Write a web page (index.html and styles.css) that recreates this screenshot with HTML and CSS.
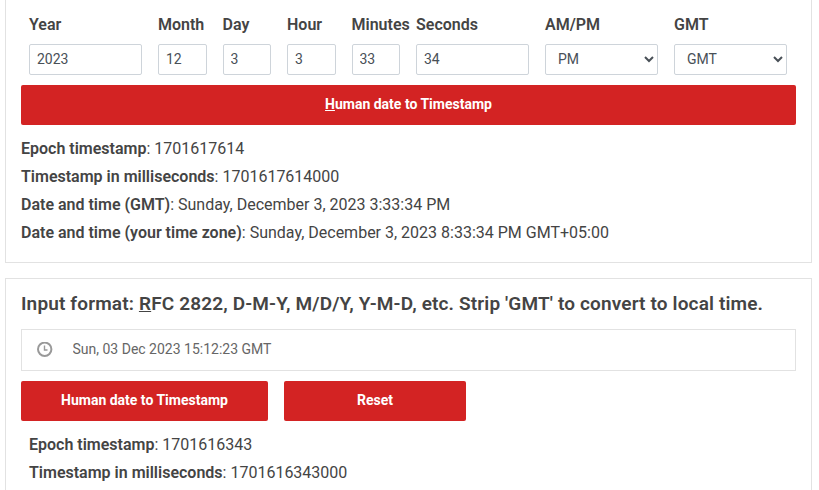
FILE: index.html
```html
<!DOCTYPE html>
<html lang="en">
<head>
    <meta charset="UTF-8">
    <meta name="viewport" content="width=device-width, initial-scale=1.0">
    <title>Epoch Converter</title>
    <link rel="stylesheet" href="styles.css">
</head>
<body>
    <!-- Date fields to timestamp -->
    <div class="card">
        <div class="date-row">
            <div class="field wide">
                <label for="year">Year</label>
                <input type="text" id="year" value="2023">
            </div>
            <div class="field">
                <label for="month">Month</label>
                <input type="text" id="month" value="12">
            </div>
            <div class="field">
                <label for="day">Day</label>
                <input type="text" id="day" value="3">
            </div>
            <div class="field">
                <label for="hour">Hour</label>
                <input type="text" id="hour" value="3">
            </div>
            <div class="field">
                <label for="minutes">Minutes</label>
                <input type="text" id="minutes" value="33">
            </div>
            <div class="field wide">
                <label for="seconds">Seconds</label>
                <input type="text" id="seconds" value="34">
            </div>
            <div class="field wide">
                <label for="ampm">AM/PM</label>
                <select id="ampm">
                    <option>AM</option>
                    <option selected>PM</option>
                </select>
            </div>
            <div class="field wide">
                <label for="zone">GMT</label>
                <select id="zone">
                    <option>GMT</option>
                    <option>Local</option>
                </select>
            </div>
        </div>
        <button class="btn btn-full"><u>H</u>uman date to Timestamp</button>
        <div class="result">
            <p><b>Epoch timestamp</b>: 1701617614</p>
            <p><b>Timestamp in milliseconds</b>: 1701617614000</p>
            <p><b>Date and time (GMT)</b>: Sunday, December 3, 2023 3:33:34 PM</p>
            <p><b>Date and time (your time zone)</b>: Sunday, December 3, 2023 8:33:34 PM GMT+05:00</p>
        </div>
    </div>

    <!-- Text date to timestamp -->
    <div class="card card-text">
        <h3>Input format: <u>R</u>FC 2822, D-M-Y, M/D/Y, Y-M-D, etc. Strip 'GMT' to convert to local time.</h3>
        <div class="date-input">
            <svg width="16" height="16" viewBox="0 0 16 16" fill="none" stroke="#999">
                <circle cx="7.7" cy="7.3" r="6.7" stroke-width="2"/>
                <path d="M7.5 3.5V8H10.5" stroke-width="1.4"/>
            </svg>
            <input type="text" value="Sun, 03 Dec 2023 15:12:23 GMT">
        </div>
        <div class="buttons">
            <button class="btn btn-convert">Human date to Timestamp</button>
            <button class="btn btn-reset">Reset</button>
        </div>
        <div class="result result-inset">
            <p><b>Epoch timestamp</b>: 1701616343</p>
            <p><b>Timestamp in milliseconds</b>: 1701616343000</p>
        </div>
    </div>
</body>
</html>
```
FILE: styles.css
```css
* {
    box-sizing: border-box;
}
body {
    margin: 0;
    padding: 0 7px 0 5px;
    background-color: #fff;
    color: #444;
    font-family: Roboto, sans-serif;
    font-size: 16px;
    line-height: 28px;
}
.card {
    height: 263px;
    padding: 11px 15px 0;
    border: 1px solid #e2e2e2;
    border-top: none;
}
.card-text {
    height: 212px;
    margin-top: 15px;
    padding-top: 10px;
    border-top: 1px solid #e2e2e2;
    border-bottom: none;
}
.date-row {
    display: grid;
    grid-template-columns: repeat(12, 64.5px);
}
.field {
    min-width: 0;
    padding: 0 8px;
}
.wide {
    grid-column: span 2;
}
.field label {
    display: block;
    height: 33px;
    font-weight: 600;
    white-space: nowrap;
}
.field input, .field select {
    display: block;
    width: 100%;
    height: 31px;
    padding: 3px 7px 5px;
    border: 1px solid #ced4da;
    border-radius: 2px;
    background-color: #fff;
    color: #495057;
    font-family: inherit;
    font-size: 14px;
}
.field select {
    padding-left: 8px;
}
.btn {
    display: block;
    height: 40px;
    padding: 0 0 2px;
    border: none;
    border-radius: 2px;
    background-color: #d32323;
    color: #fff;
    font-family: inherit;
    font-size: 14px;
    font-weight: 700;
}
.btn-full {
    width: 100%;
    margin-top: 10px;
}
.result {
    margin-top: 10px;
}
.result p {
    margin: 0;
}
.result b {
    font-weight: 600;
}
.result-inset {
    padding-left: 8px;
}
h3 {
    margin: 0 0 11px;
    font-size: 19px;
    font-weight: 600;
    line-height: 29px;
    letter-spacing: 0.15px;
    white-space: nowrap;
}
.date-input {
    display: flex;
    align-items: center;
    height: 42px;
    padding-left: 15px;
    border: 1px solid #e2e2e2;
}
.date-input input {
    flex: 1;
    margin-left: 19.5px;
    padding: 0 0 2px;
    border: none;
    color: #666;
    font-family: inherit;
    font-size: 14px;
}
.buttons {
    display: flex;
    gap: 16px;
    margin-top: 10px;
}
.btn-convert {
    width: 247px;
}
.btn-reset {
    width: 182px;
}
```
